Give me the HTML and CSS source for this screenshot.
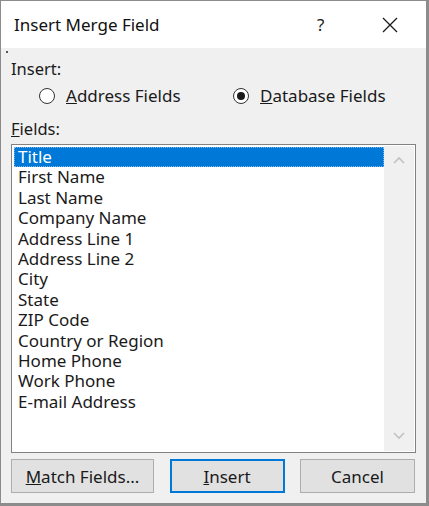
FILE: index.html
```html
<!DOCTYPE html>
<html>
<head>
<meta charset="utf-8">
<link rel="stylesheet" href="styles.css">
</head>
<body>
<div class="dialog">
  <div class="titlebar">
    <span class="title">Insert Merge Field</span>
    <span class="help">?</span>
    <span class="close">
      <svg width="16" height="16" viewBox="0 0 16 16"><path d="M1 1 L15 15 M15 1 L1 15" stroke="#1a1a1a" stroke-width="1.3" fill="none"/></svg>
    </span>
  </div>
  <div class="content">
    <div class="grip"></div>
    <div class="label">Insert:</div>
    <div class="radios">
      <label class="radio"><span class="circle"></span><span><u>A</u>ddress Fields</span></label>
      <label class="radio"><span class="circle on"></span><span><u>D</u>atabase Fields</span></label>
    </div>
    <div class="label fields-label"><u>F</u>ields:</div>
    <div class="listbox">
      <div class="items">
        <div class="item sel">Title</div>
        <div class="item">First Name</div>
        <div class="item">Last Name</div>
        <div class="item">Company Name</div>
        <div class="item">Address Line 1</div>
        <div class="item">Address Line 2</div>
        <div class="item">City</div>
        <div class="item">State</div>
        <div class="item">ZIP Code</div>
        <div class="item">Country or Region</div>
        <div class="item">Home Phone</div>
        <div class="item">Work Phone</div>
        <div class="item">E-mail Address</div>
      </div>
      <div class="scroll">
        <svg width="12" height="8" viewBox="0 0 12 8"><path d="M1 7 L6 2 L11 7" stroke="#c2c2c2" stroke-width="1.6" fill="none"/></svg>
        <svg width="12" height="8" viewBox="0 0 12 8"><path d="M1 1 L6 6 L11 1" stroke="#c2c2c2" stroke-width="1.6" fill="none"/></svg>
      </div>
    </div>
    <div class="buttons">
      <button class="btn"><u>M</u>atch Fields...</button>
      <button class="btn default"><u>I</u>nsert</button>
      <button class="btn">Cancel</button>
    </div>
  </div>
</div>
</body>
</html>
```
FILE: styles.css
```css
html, body {
  margin: 0;
  padding: 0;
  background: #8c8c8c;
}
.dialog {
  width: 425px;
  height: 502px;
  margin: 1px 3px 3px 1px;
  display: flex;
  flex-direction: column;
  font-family: "Noto Sans", "Open Sans", sans-serif;
  color: #1a1a1a;
  overflow: hidden;
}
.titlebar {
  height: 47px;
  background: #fff;
  display: flex;
  align-items: center;
  flex-shrink: 0;
}
.title {
  margin-left: 13px;
  font-size: 17px;
  flex: 1;
  color: #111;
}
.help {
  font-size: 17px;
  width: 20px;
  margin-right: 45px;
}
.close {
  width: 16px;
  height: 16px;
  margin-right: 28px;
  display: flex;
}
.content {
  flex: 1;
  background: #f0f0f0;
  display: flex;
  flex-direction: column;
  padding: 0 10px 0 10px;
  position: relative;
}
.grip {
  position: absolute;
  left: 5px;
  top: 3px;
  width: 2px;
  height: 2px;
  background: #555;
}
.label {
  font-size: 16.5px;
  margin-top: 12px;
  line-height: 18px;
}
.radios {
  display: flex;
  margin-top: 8px;
  padding-left: 28px;
  font-size: 17px;
  line-height: 20px;
}
.radio {
  display: flex;
  align-items: center;
}
.radio:first-child {
  width: 194px;
}
.circle {
  width: 14px;
  height: 14px;
  border: 1px solid #333;
  border-radius: 50%;
  background: #fff;
  margin-right: 11px;
  display: flex;
  align-items: center;
  justify-content: center;
}
.circle.on::after {
  content: "";
  width: 8px;
  height: 8px;
  border-radius: 50%;
  background: #1a1a1a;
}
.fields-label {
  margin-top: 14px;
}
.listbox {
  margin-top: 6px;
  height: 307px;
  border: 1px solid #828282;
  background: #fff;
  display: flex;
  flex-shrink: 0;
}
.items {
  flex: 1;
  padding: 2px 0 0 2px;
  font-size: 17px;
}
.item {
  height: 20.4px;
  line-height: 20px;
  padding-left: 4px;
  box-sizing: border-box;
}
.item.sel {
  background: #0078d7;
  color: #fff;
  outline: 1px dotted #7fb6e6;
  outline-offset: -1px;
}
.scroll {
  width: 30px;
  background: #f0f0f0;
  display: flex;
  flex-direction: column;
  justify-content: space-between;
  align-items: center;
  padding: 10px 0 11px;
  margin: 1px 1px 1px 0;
}
.buttons {
  display: flex;
  justify-content: space-between;
  margin-top: 6px;
  padding-right: 1px;
}
.btn {
  height: 34px;
  width: 143px;
  background: #e1e1e1;
  border: 1px solid #adadad;
  font-family: inherit;
  font-size: 17px;
  color: #1a1a1a;
  padding: 0;
}
.btn.default {
  width: 115px;
  border: 2px solid #0078d7;
}
.btn:last-child {
  width: 115px;
}
```
